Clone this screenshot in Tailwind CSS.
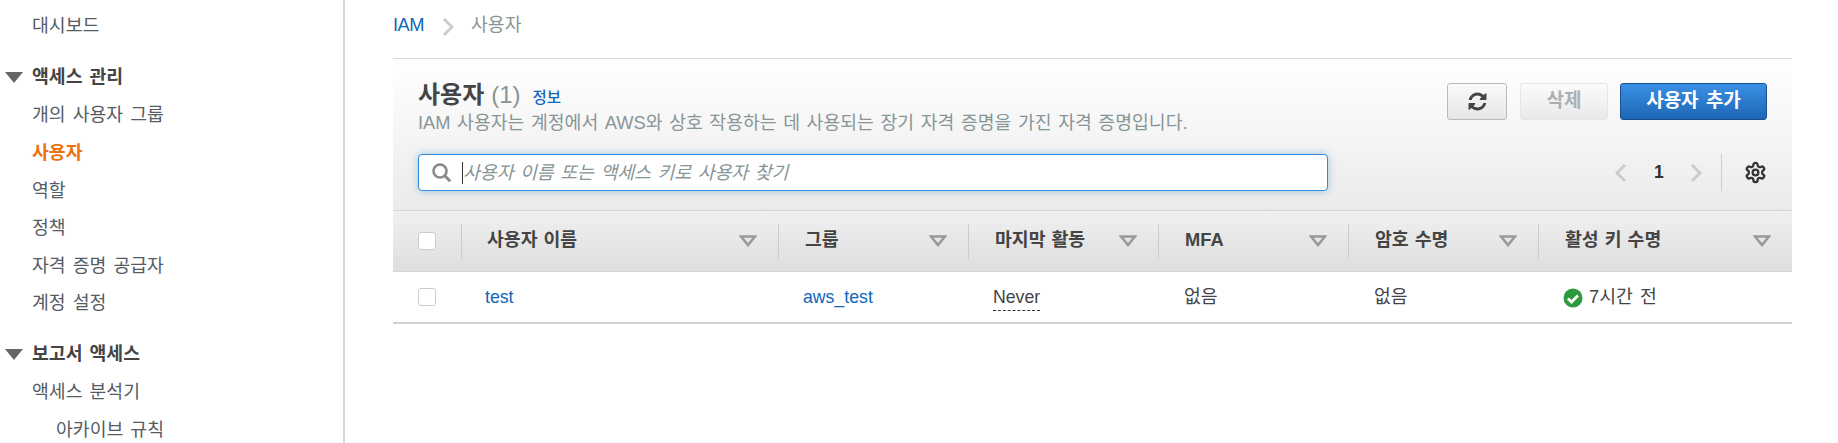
<!DOCTYPE html>
<html lang="ko">
<head>
    <meta charset="UTF-8">
    <title>IAM 사용자</title>
    <script src="https://cdn.jsdelivr.net/npm/@tailwindcss/browser@4"></script>
</head>
<body class="h-[443px] overflow-hidden bg-white font-['Liberation_Sans','Noto_Sans_CJK_KR',sans-serif] text-[#444]">
<div class="flex h-[443px]">

    <!-- Sidebar -->
    <nav class="w-[345px] shrink-0 border-r-2 border-[#d5dbdb] pt-[7px] text-[18.3px] text-[#545b64] [word-spacing:2px]">
        <div class="flex h-[38px] items-center pl-[32px]">대시보드</div>
        <div class="mt-[13px] flex h-[38px] items-center font-bold text-[#444]">
            <svg class="ml-[5px] mr-[9px] h-[11px] w-[18px]" viewBox="0 0 18 11"><path d="M0 0h18L9 11z" fill="#666"/></svg>액세스 관리
        </div>
        <div class="flex h-[38px] items-center pl-[32px]">개의 사용자 그룹</div>
        <div class="flex h-[38px] items-center pl-[32px] font-bold text-[#ec7211]">사용자</div>
        <div class="flex h-[37px] items-center pl-[32px]">역할</div>
        <div class="flex h-[38px] items-center pl-[32px]">정책</div>
        <div class="flex h-[37px] items-center pl-[32px]">자격 증명 공급자</div>
        <div class="flex h-[38px] items-center pl-[32px]">계정 설정</div>
        <div class="mt-[13px] flex h-[38px] items-center font-bold text-[#444]">
            <svg class="ml-[5px] mr-[9px] h-[11px] w-[18px]" viewBox="0 0 18 11"><path d="M0 0h18L9 11z" fill="#666"/></svg>보고서 액세스
        </div>
        <div class="flex h-[38px] items-center pl-[32px]">액세스 분석기</div>
        <div class="flex h-[37px] items-center pl-[56px]">아카이브 규칙</div>
    </nav>

    <!-- Main -->
    <main class="ml-[48px] w-[1399px] shrink-0">
        <!-- Breadcrumb -->
        <div class="flex h-[59px] items-center border-b border-[#d5dbdb] pb-[8px] text-[18.3px]">
            <span class="text-[#16b] tracking-[-0.5px]">IAM</span>
            <svg class="ml-[18px] mr-[17px] mt-[3px] h-[20px] w-[12px]" viewBox="0 0 12 20" fill="none"><path d="M2 2l8 8-8 8" stroke="#ccc" stroke-width="3"/></svg>
            <span class="text-[#879596]">사용자</span>
        </div>

        <!-- Panel header -->
        <div class="h-[151px] bg-gradient-to-b from-white to-[#ebebeb] pl-[25px] pr-[25px]">
            <div class="flex h-[95px] justify-between pt-[20px]">
                <div>
                    <div class="flex items-baseline leading-[32px]">
                        <h1 class="text-[24px] font-bold text-[#444]">사용자</h1>
                        <span class="ml-[7px] text-[24px] text-[#879596]">(1)</span>
                        <a class="ml-[12px] text-[15.5px] font-medium text-[#16b]">정보</a>
                    </div>
                    <p class="mt-[-3px] text-[18.3px] leading-[24px] text-[#879596] [word-spacing:1.5px]">IAM 사용자는 계정에서 AWS와 상호 작용하는 데 사용되는 장기 자격 증명을 가진 자격 증명입니다.</p>
                </div>
                <div class="mt-[4px] flex items-start">
                    <button class="flex h-[37px] w-[60px] items-center justify-center rounded-[3px] border border-[#bbb] bg-gradient-to-b from-[#fafafa] to-[#e6e6e6]">
                        <svg class="h-[21px] w-[21px]" viewBox="0 0 1792 1792"><path fill="#444" d="M1639 1056q0 5-1 7-64 268-268 434.5t-478 166.5q-146 0-282.5-55t-243.5-157l-129 129q-19 19-45 19t-45-19-19-45v-448q0-26 19-45t45-19h448q26 0 45 19t19 45-19 45l-137 137q71 66 161 102t187 36q134 0 250-65t186-179q11-17 53-117 8-23 30-23h192q13 0 22.5 9.5t9.5 22.5zm25-800v448q0 26-19 45t-45 19h-448q-26 0-45-19t-19-45 19-45l138-138q-148-137-349-137-134 0-250 65t-186 179q-11 17-53 117-8 23-30 23h-199q-13 0-22.5-9.5t-9.5-22.5v-7q65-268 270-434.5t480-166.5q146 0 284 55.5t245 156.5l130-129q19-19 45-19t45 19 19 45z"/></svg>
                    </button>
                    <button class="ml-[13px] h-[37px] w-[88px] rounded-[3px] border border-[#e6e6e6] bg-gradient-to-b from-[#fbfbfb] to-[#e9e9e9] text-[19px] font-bold text-[#aab0b0]">삭제</button>
                    <button class="ml-[12px] h-[37px] w-[147px] rounded-[3px] border border-[#19508f] bg-gradient-to-b from-[#3a90e4] to-[#1f66b5] text-[19px] font-bold text-white [word-spacing:2px]">사용자 추가</button>
                </div>
            </div>
            <div class="flex items-center justify-between">
                <div class="flex h-[37px] w-[910px] items-center rounded-[4px] border border-[#2f8ae0] bg-white pl-[13px] shadow-[0_0_8px_rgba(0,115,187,0.35)]">
                    <svg class="h-[20px] w-[20px] shrink-0" viewBox="0 0 20 20" fill="none"><circle cx="8" cy="8" r="6.5" stroke="#8a8a8a" stroke-width="2.6"/><path d="M12.8 12.8l5.4 5.4" stroke="#8a8a8a" stroke-width="3"/></svg>
                    <span class="ml-[10px] h-[22px] w-px bg-[#333]"></span>
                    <span class="text-[18.3px] italic text-[#879596] [word-spacing:1.5px]">사용자 이름 또는 액세스 키로 사용자 찾기</span>
                </div>
                <div class="flex items-center">
                    <svg class="h-[20px] w-[13px]" viewBox="0 0 13 20" fill="none"><path d="M11 2l-8 8 8 8" stroke="#ccc" stroke-width="3"/></svg>
                    <span class="ml-[27px] w-[10px] text-[17.5px] font-bold text-[#333]">1</span>
                    <svg class="ml-[26px] h-[20px] w-[13px]" viewBox="0 0 13 20" fill="none"><path d="M2 2l8 8-8 8" stroke="#ccc" stroke-width="3"/></svg>
                    <span class="ml-[18px] h-[37px] w-px bg-[#ccc]"></span>
                    <svg class="ml-[22px] h-[23px] w-[23px]" viewBox="0 0 24 24" fill="none" stroke="#333" stroke-width="2.4"><path d="M12.22 2h-.44a2 2 0 0 0-2 2v.18a2 2 0 0 1-1 1.73l-.43.25a2 2 0 0 1-2 0l-.15-.08a2 2 0 0 0-2.73.73l-.22.38a2 2 0 0 0 .73 2.73l.15.1a2 2 0 0 1 1 1.72v.51a2 2 0 0 1-1 1.74l-.15.09a2 2 0 0 0-.73 2.73l.22.38a2 2 0 0 0 2.73.73l.15-.08a2 2 0 0 1 2 0l.43.25a2 2 0 0 1 1 1.73V20a2 2 0 0 0 2 2h.44a2 2 0 0 0 2-2v-.18a2 2 0 0 1 1-1.73l.43-.25a2 2 0 0 1 2 0l.15.08a2 2 0 0 0 2.73-.73l.22-.39a2 2 0 0 0-.73-2.73l-.15-.08a2 2 0 0 1-1-1.74v-.5a2 2 0 0 1 1-1.74l.15-.09a2 2 0 0 0 .73-2.73l-.22-.38a2 2 0 0 0-2.73-.73l-.15.08a2 2 0 0 1-2 0l-.43-.25a2 2 0 0 1-1-1.73V4a2 2 0 0 0-2-2z"/><circle cx="12" cy="12" r="3"/></svg>
                </div>
            </div>
        </div>

        <!-- Table head -->
        <div class="grid h-[62px] grid-cols-[68px_317px_190px_190px_190px_190px_254px] items-center border-y border-[#d5d5d5] bg-gradient-to-b from-[#f0f0f0] to-[#dedede] text-[18.3px] font-bold text-[#444] [word-spacing:1px]">
            <div class="pl-[25px]"><span class="block h-[18px] w-[18px] rounded-[3px] border border-[#ccc] bg-white"></span></div>
            <div class="flex h-[35px] items-center justify-between border-l border-[#ccc] pl-[25px] pr-[21px]"><span class="mt-[-2px]">사용자 이름</span><svg class="h-[12px] w-[18px]" viewBox="0 0 18 12" fill="none"><path d="M2 1.5h14L9 10z" stroke="#999" stroke-width="2.6"/></svg></div>
            <div class="flex h-[35px] items-center justify-between border-l border-[#ccc] pl-[26px] pr-[21px]"><span class="mt-[-2px]">그룹</span><svg class="h-[12px] w-[18px]" viewBox="0 0 18 12" fill="none"><path d="M2 1.5h14L9 10z" stroke="#999" stroke-width="2.6"/></svg></div>
            <div class="flex h-[35px] items-center justify-between border-l border-[#ccc] pl-[26px] pr-[21px]"><span class="mt-[-2px]">마지막 활동</span><svg class="h-[12px] w-[18px]" viewBox="0 0 18 12" fill="none"><path d="M2 1.5h14L9 10z" stroke="#999" stroke-width="2.6"/></svg></div>
            <div class="flex h-[35px] items-center justify-between border-l border-[#ccc] pl-[26px] pr-[21px]"><span class="mt-[-2px]">MFA</span><svg class="h-[12px] w-[18px]" viewBox="0 0 18 12" fill="none"><path d="M2 1.5h14L9 10z" stroke="#999" stroke-width="2.6"/></svg></div>
            <div class="flex h-[35px] items-center justify-between border-l border-[#ccc] pl-[26px] pr-[21px]"><span class="mt-[-2px]">암호 수명</span><svg class="h-[12px] w-[18px]" viewBox="0 0 18 12" fill="none"><path d="M2 1.5h14L9 10z" stroke="#999" stroke-width="2.6"/></svg></div>
            <div class="flex h-[35px] items-center justify-between border-l border-[#ccc] pl-[26px] pr-[21px]"><span class="mt-[-2px]">활성 키 수명</span><svg class="h-[12px] w-[18px]" viewBox="0 0 18 12" fill="none"><path d="M2 1.5h14L9 10z" stroke="#999" stroke-width="2.6"/></svg></div>
        </div>

        <!-- Table row -->
        <div class="grid h-[52px] grid-cols-[68px_317px_190px_190px_190px_190px_254px] items-center border-b-2 border-[#d0d0d0] text-[17.7px] text-[#444]">
            <div class="pl-[25px]"><span class="block h-[18px] w-[18px] rounded-[3px] border border-[#ccc] bg-white"></span></div>
            <div class="pl-[24px] text-[#16b]">test</div>
            <div class="pl-[25px] text-[#16b]">aws_test</div>
            <div class="pl-[25px]"><span class="border-b border-dashed border-[#333] pb-[3px]">Never</span></div>
            <div class="pl-[26px] text-[18.3px]">없음</div>
            <div class="pl-[26px] text-[18.3px]">없음</div>
            <div class="flex items-center pl-[25px] text-[18.3px] [word-spacing:2px]">
                <svg class="mr-[6px] mt-[2px] h-[20px] w-[20px]" viewBox="0 0 20 20"><circle cx="10" cy="10" r="9.5" fill="#2e9a3f"/><path d="M5 10.5l3.5 3.5L15 7.5" fill="none" stroke="#fff" stroke-width="2.8"/></svg>7시간 전
            </div>
        </div>
    </main>
</div>
</body>
</html>
